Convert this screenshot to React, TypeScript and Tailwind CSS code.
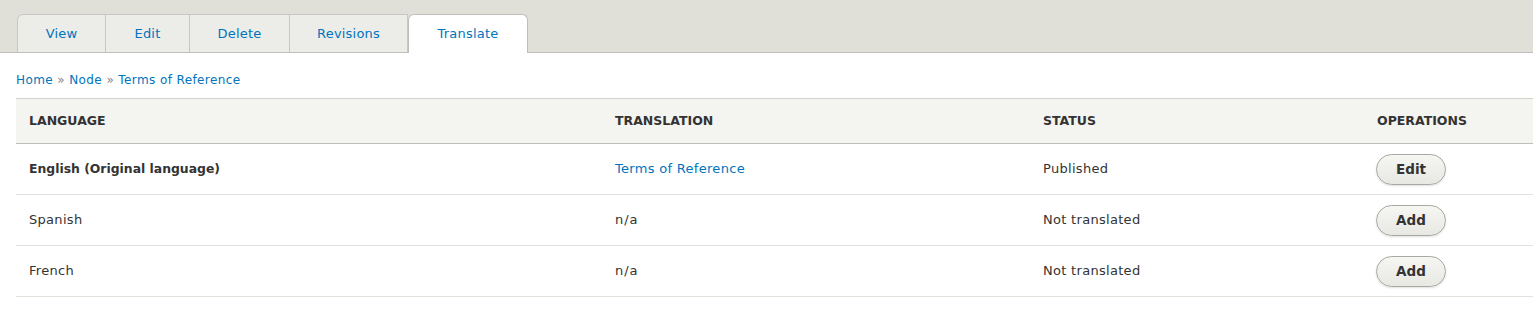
const tabs = [
  { label: "View", w: "w-[89px]" },
  { label: "Edit", w: "w-[84px]" },
  { label: "Delete", w: "w-[100px]" },
  { label: "Revisions", w: "w-[118px]" },
];

interface Row {
  language: string;
  original?: boolean;
  translation: string;
  link?: boolean;
  status: string;
  op: string;
}

const rows: Row[] = [
  {
    language: "English (Original language)",
    original: true,
    translation: "Terms of Reference",
    link: true,
    status: "Published",
    op: "Edit",
  },
  { language: "Spanish", translation: "n/a", status: "Not translated", op: "Add" },
  { language: "French", translation: "n/a", status: "Not translated", op: "Add" },
];

const App = () => {
  return (
    <div
      className="min-h-[327px] bg-white text-[#333] text-[13px]"
      style={{ fontFamily: '"DejaVu Sans", "Liberation Sans", sans-serif' }}
    >
      {/* Tabs */}
      <div className="bg-[#e0e0d8] pt-[14px] pl-[17px] border-b border-[#bfbfba]">
        <ul className="flex">
          {tabs.map((t, i) => (
            <li
              key={t.label}
              className={`${t.w} h-[38px] -mb-px flex items-center justify-center bg-[#ecece8] border-t border-[#c8c8c2] border-r ${
                i === 0 ? "border-l rounded-tl-[6px]" : ""
              }`}
            >
              <a className="text-[#0074bd] tracking-[0.2px]">{t.label}</a>
            </li>
          ))}
          <li className="w-[120px] h-[39px] -mb-px flex items-center justify-center bg-white border border-b-0 border-[#bfbfba] rounded-t-[6px]">
            <a className="text-[#0074bd] tracking-[0.2px]">Translate</a>
          </li>
        </ul>
      </div>

      {/* Breadcrumb */}
      <div className="pl-[16px] pt-[18px] pb-[9px] text-[12px] leading-[18px] tracking-[0.4px] text-[#0074bd]">
        <a>Home</a> <span className="text-[#888]">»</span> <a>Node</a>{" "}
        <span className="text-[#888]">»</span> <a>Terms of Reference</a>
      </div>

      {/* Table */}
      <div className="ml-[16px]">
        <table className="w-full border-collapse table-fixed">
          <colgroup>
            <col className="w-[586px]" />
            <col className="w-[428px]" />
            <col className="w-[334px]" />
            <col />
          </colgroup>
          <thead>
            <tr className="bg-[#f4f4f0] border-t border-[#d2d2cc] border-b border-b-[#bfbfba]">
              {["Language", "Translation", "Status", "Operations"].map((h) => (
                <th
                  key={h}
                  className="h-[45px] text-left font-bold uppercase text-[12.5px] text-[#333] pl-[13px] pt-[1px]"
                >
                  {h}
                </th>
              ))}
            </tr>
          </thead>
          <tbody>
            {rows.map((r) => (
              <tr key={r.language} className="border-b border-[#e2e1dc]">
                <td
                  className={`h-[51px] pl-[13px] ${
                    r.original ? "font-bold text-[12.4px]" : "tracking-[0.3px]"
                  }`}
                >
                  {r.language}
                </td>
                <td className="pl-[13px] tracking-[0.3px]">
                  {r.link ? (
                    <a className="text-[#0074bd]">{r.translation}</a>
                  ) : (
                    <span className="tracking-[1px]">{r.translation}</span>
                  )}
                </td>
                <td className="pl-[13px] tracking-[0.3px]">{r.status}</td>
                <td className="pl-[12px]">
                  <button className="w-[70px] h-[31px] rounded-full border border-[#a9a9a3] bg-gradient-to-b from-[#f6f6f2] to-[#e8e8e3] font-bold text-[13.5px] text-[#333] shadow-[0_1px_2px_rgba(0,0,0,0.12)]">
                    {r.op}
                  </button>
                </td>
              </tr>
            ))}
          </tbody>
        </table>
      </div>
    </div>
  );
};

export default App;
